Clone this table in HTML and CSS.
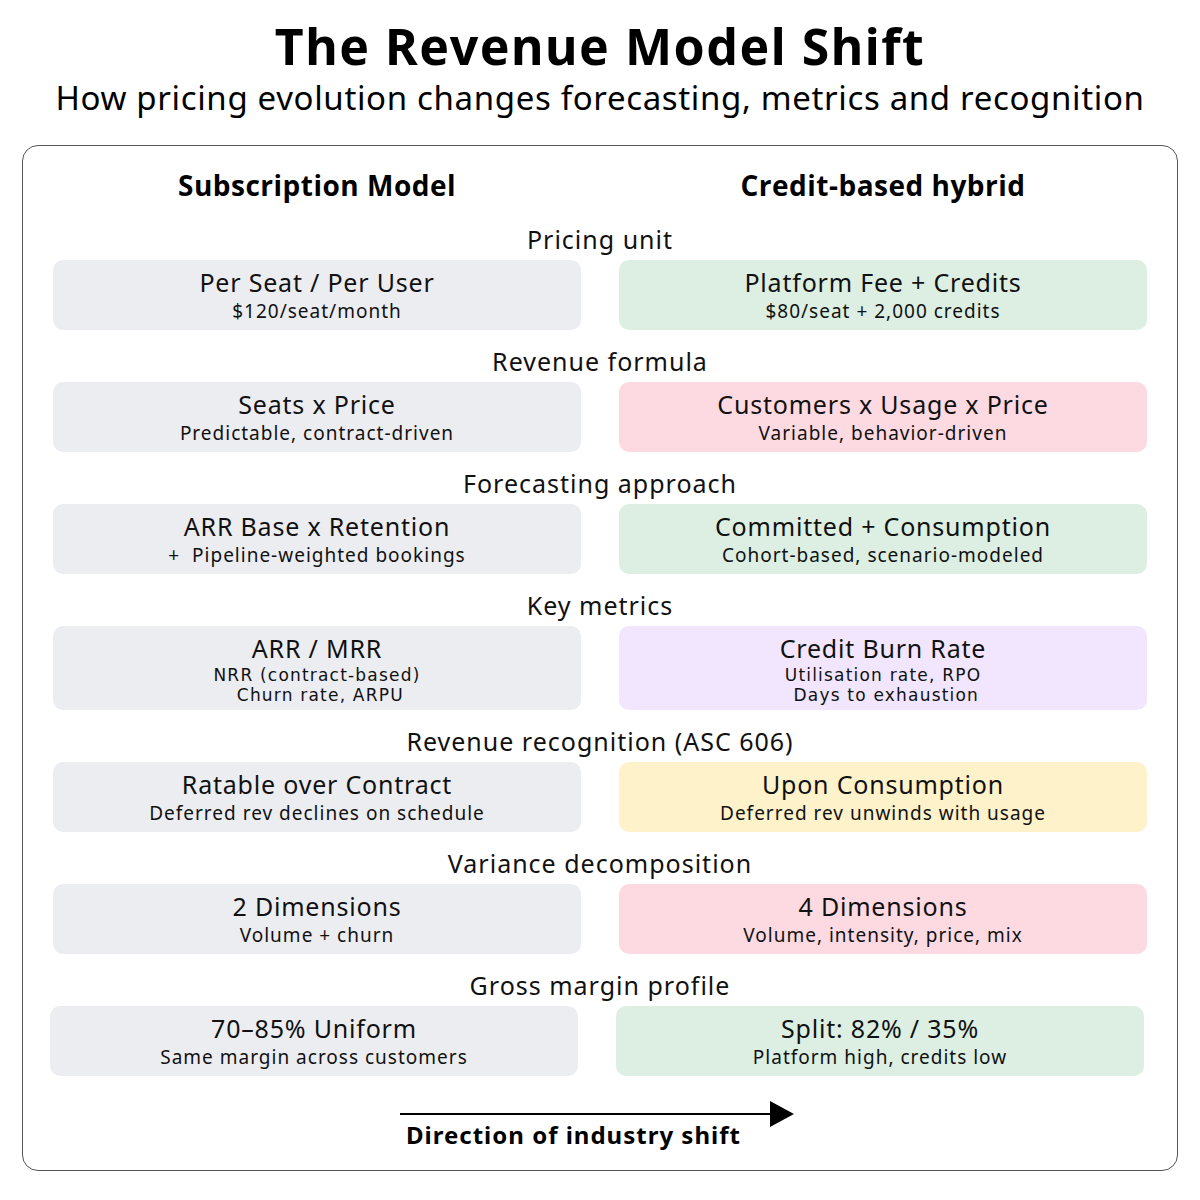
FILE: index.html
```html
<!DOCTYPE html>
<html lang="en">
<head>
<meta charset="utf-8">
<title>The Revenue Model Shift</title>
<link rel="stylesheet" href="styles.css">
</head>
<body>
<header class="header">
  <h1 class="title">The Revenue Model Shift</h1>
  <p class="subtitle">How pricing evolution changes forecasting, metrics and recognition</p>
</header>
<main class="panel">
  <div class="heads">
    <div class="head">Subscription Model</div>
    <div class="head">Credit-based hybrid</div>
  </div>

  <section class="row">
    <div class="label">Pricing unit</div>
    <div class="pair">
      <div class="box gray"><div class="box-title">Per Seat / Per User</div><div class="box-sub">$120/seat/month</div></div>
      <div class="box green"><div class="box-title">Platform Fee + Credits</div><div class="box-sub">$80/seat + 2,000 credits</div></div>
    </div>
  </section>

  <section class="row">
    <div class="label">Revenue formula</div>
    <div class="pair">
      <div class="box gray"><div class="box-title">Seats x Price</div><div class="box-sub">Predictable, contract-driven</div></div>
      <div class="box pink"><div class="box-title">Customers x Usage x Price</div><div class="box-sub">Variable, behavior-driven</div></div>
    </div>
  </section>

  <section class="row">
    <div class="label">Forecasting approach</div>
    <div class="pair">
      <div class="box gray"><div class="box-title">ARR Base x Retention</div><div class="box-sub">+&nbsp; Pipeline-weighted bookings</div></div>
      <div class="box green"><div class="box-title">Committed + Consumption</div><div class="box-sub">Cohort-based, scenario-modeled</div></div>
    </div>
  </section>

  <section class="row">
    <div class="label">Key metrics</div>
    <div class="pair">
      <div class="box gray tall"><div class="box-title">ARR / MRR</div><div class="box-sub multi">NRR (contract-based)<br>&nbsp;Churn rate, ARPU</div></div>
      <div class="box purple tall"><div class="box-title">Credit Burn Rate</div><div class="box-sub multi">Utilisation rate, RPO<br>&nbsp;Days to exhaustion</div></div>
    </div>
  </section>

  <section class="row">
    <div class="label">Revenue recognition (ASC 606)</div>
    <div class="pair">
      <div class="box gray"><div class="box-title">Ratable over Contract</div><div class="box-sub">Deferred rev declines on schedule</div></div>
      <div class="box yellow"><div class="box-title">Upon Consumption</div><div class="box-sub">Deferred rev unwinds with usage</div></div>
    </div>
  </section>

  <section class="row">
    <div class="label">Variance decomposition</div>
    <div class="pair">
      <div class="box gray"><div class="box-title">2 Dimensions</div><div class="box-sub">Volume + churn</div></div>
      <div class="box pink"><div class="box-title">4 Dimensions</div><div class="box-sub">Volume, intensity, price, mix</div></div>
    </div>
  </section>

  <section class="row">
    <div class="label">Gross margin profile</div>
    <div class="pair shifted">
      <div class="box gray"><div class="box-title">70–85% Uniform</div><div class="box-sub">Same margin across customers</div></div>
      <div class="box green"><div class="box-title">Split: 82% / 35%</div><div class="box-sub">Platform high, credits low</div></div>
    </div>
  </section>

  <div class="shift">
    <svg class="arrow" width="394" height="28" viewBox="0 0 394 28" aria-hidden="true">
      <line x1="0" y1="14" x2="372" y2="14" stroke="#000" stroke-width="2"/>
      <polygon points="370,1 394,14 370,27" fill="#000"/>
    </svg>
    <div class="shift-label">Direction of industry shift</div>
  </div>
</main>
</body>
</html>
```
FILE: styles.css
```css
* { box-sizing: border-box; }
html, body { margin: 0; padding: 0; background: #fff; }
body {
  width: 1200px;
  height: 1200px;
  font-family: "Noto Sans", "DejaVu Sans", sans-serif;
  color: #111;
}
.header {
  text-align: center;
  padding-top: 16px;
}
.title {
  margin: 0;
  font-family: "Noto Sans", sans-serif;
  font-weight: 700;
  font-size: 50px;
  letter-spacing: 1.5px;
  line-height: 60px;
  color: #000;
}
.subtitle {
  margin: 0;
  font-size: 33px;
  letter-spacing: 0.65px;
  line-height: 44px;
  color: #000;
  font-weight: 400;
}
.panel {
  margin: 25px 0 0 22px;
  width: 1156px;
  height: 1026px;
  border: 1px solid #555;
  border-radius: 16px;
  padding: 22px 30px 0;
  display: flex;
  flex-direction: column;
}
.heads {
  display: grid;
  grid-template-columns: 528px 528px;
  column-gap: 38px;
  margin-bottom: 6px;
}
.head {
  text-align: center;
  font-family: "Open Sans", sans-serif;
  font-weight: 700;
  font-size: 28px;
  letter-spacing: 0.5px;
  line-height: 34px;
  color: #000;
}
.row {
  margin-top: 16px;
}
.label {
  text-align: center;
  font-size: 25px;
  letter-spacing: 1px;
  line-height: 30px;
  margin-bottom: 6px;
  color: #111;
}
.pair {
  display: grid;
  grid-template-columns: 528px 528px;
  column-gap: 38px;
}
.pair.shifted {
  margin-left: -3px;
  margin-right: 3px;
}
.box {
  height: 70px;
  border-radius: 10px;
  padding-top: 7px;
  text-align: center;
}
.box.tall { height: 84px; }
.box-title {
  font-size: 25px;
  letter-spacing: 0.8px;
  line-height: 30px;
  color: #111;
}
.box-sub {
  margin-top: 2px;
  font-size: 19px;
  letter-spacing: 1px;
  line-height: 24px;
  color: #111;
}
.box-sub.multi {
  margin-top: 2px;
  font-family: "DejaVu Sans", "Noto Sans", sans-serif;
  font-size: 17px;
  letter-spacing: 1.2px;
  line-height: 20px;
}
.gray { background: #ecedf1; }
.green { background: #dcefe2; }
.pink { background: #fddae1; }
.purple { background: #f1e6fd; }
.yellow { background: #fef2cb; }
.shift {
  margin: 24px 0 0 347px;
  width: 394px;
  display: flex;
  flex-direction: column;
}
.arrow { display: block; }
.shift-label {
  margin-top: -6px;
  padding-left: 6px;
  font-weight: 700;
  font-size: 24px;
  letter-spacing: 1px;
  line-height: 26px;
  color: #000;
  white-space: nowrap;
}
```
